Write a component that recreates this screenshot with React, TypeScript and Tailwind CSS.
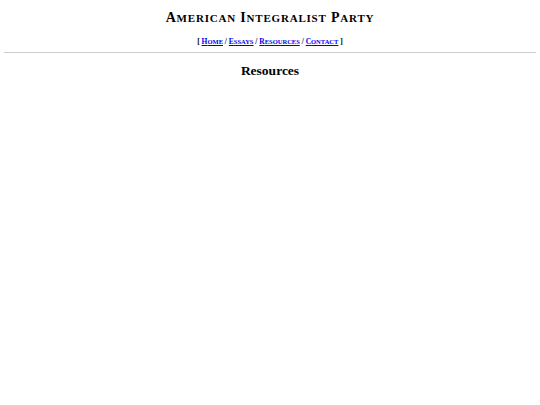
const serif = { fontFamily: '"Liberation Serif", serif' }

function Caps({ text, big, small }: { text: string; big: string; small: string }) {
  return (
    <>
      {text.split(" ").map((w, i) => (
        <span key={i}>
          {i > 0 ? " " : ""}
          <span className={big}>{w[0].toUpperCase()}</span>
          <span className={small}>{w.slice(1).toUpperCase()}</span>
        </span>
      ))}
    </>
  )
}

export default function App() {
  const links = ["Home", "Essays", "Resources", "Contact"]
  return (
    <div className="min-h-[405px] bg-white px-1 text-black" style={serif}>
      <header className="pt-[9px] text-center">
        <h1 className="text-[14px] font-bold leading-[18px] tracking-[0.8px]">
          <Caps text="American Integralist Party" big="text-[14px]" small="text-[11px]" />
        </h1>
        <nav className="mt-[10px] text-[7.5px] font-bold leading-[10px]">
          [{" "}
          {links.map((l, i) => (
            <span key={l}>
              <a href="#" className="text-[#0000ee] underline">
                <Caps text={l} big="text-[7.5px]" small="text-[6.5px]" />
              </a>
              {i < links.length - 1 ? " / " : ""}
            </span>
          ))}{" "}
          ]
        </nav>
      </header>
      <hr className="mt-[5px] border-t border-[#cccccc]" />
      <h2 className="mt-[9px] text-center text-[13.5px] font-bold leading-[18px]">Resources</h2>
    </div>
  )
}
